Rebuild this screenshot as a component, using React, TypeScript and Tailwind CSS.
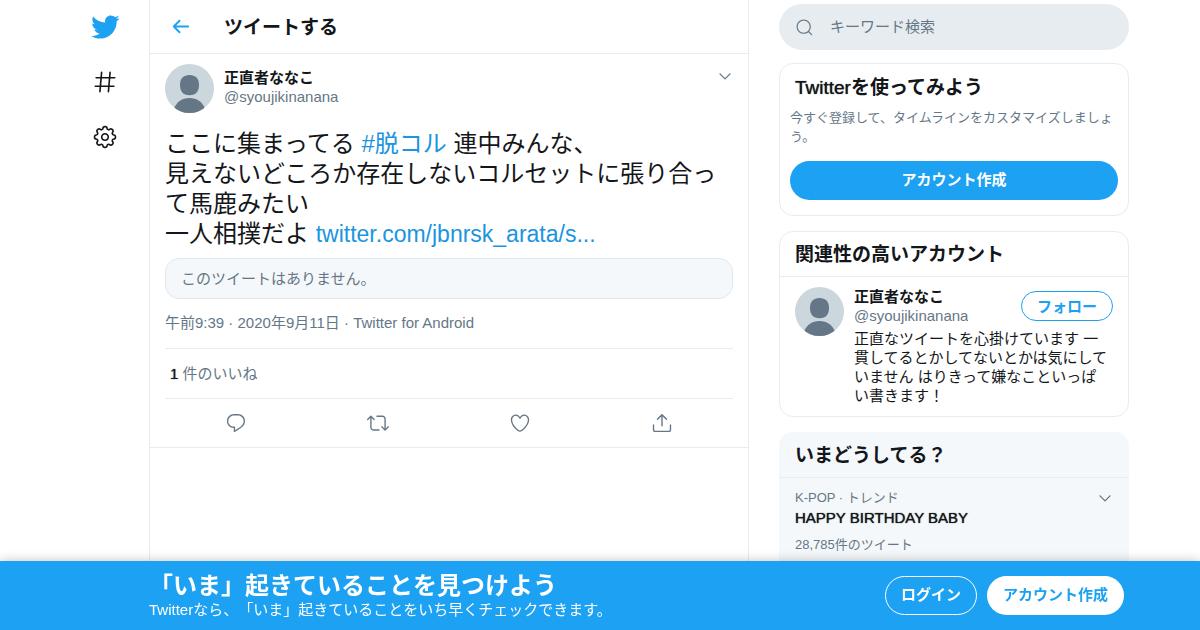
import type { ReactNode } from 'react'

const ICONS = {
  bird: 'M23.643 4.937c-.835.37-1.732.62-2.675.733.962-.576 1.7-1.49 2.048-2.578-.9.534-1.897.922-2.958 1.13-.85-.904-2.06-1.47-3.4-1.47-2.572 0-4.658 2.086-4.658 4.66 0 .364.042.718.12 1.06-3.873-.195-7.304-2.05-9.602-4.868-.4.69-.63 1.49-.63 2.342 0 1.616.823 3.043 2.072 3.878-.764-.025-1.482-.234-2.11-.583v.06c0 2.257 1.605 4.14 3.737 4.568-.392.106-.803.162-1.227.162-.3 0-.593-.028-.877-.082.593 1.85 2.313 3.198 4.352 3.234-1.595 1.25-3.604 1.995-5.786 1.995-.376 0-.747-.022-1.112-.065 2.062 1.323 4.51 2.093 7.14 2.093 8.57 0 13.255-7.098 13.255-13.254 0-.2-.005-.402-.014-.602.91-.658 1.7-1.477 2.323-2.41z',
  hash: 'M21 7.337h-3.93l.372-4.272c.036-.412-.27-.775-.682-.812-.417-.03-.776.27-.812.683l-.383 4.4h-6.32l.37-4.27c.037-.413-.27-.776-.68-.813-.42-.03-.777.27-.813.683l-.382 4.4H3.782c-.414 0-.75.337-.75.75s.336.75.75.75H7.61l-.55 6.327H3c-.414 0-.75.336-.75.75s.336.75.75.75h3.93l-.372 4.272c-.036.412.27.775.682.812l.066.003c.385 0 .712-.295.746-.686l.383-4.4h6.32l-.37 4.27c-.036.413.27.776.682.813l.066.003c.385 0 .712-.295.746-.686l.382-4.4h3.957c.413 0 .75-.337.75-.75s-.337-.75-.75-.75H16.39l.55-6.327H21c.414 0 .75-.336.75-.75s-.336-.75-.75-.75zm-6.115 7.826h-6.32l.55-6.326h6.32l-.55 6.326z',
  gear: 'M12 8.21c-2.09 0-3.79 1.7-3.79 3.79s1.7 3.79 3.79 3.79 3.79-1.7 3.79-3.79-1.7-3.79-3.79-3.79zm0 6.08c-1.262 0-2.29-1.026-2.29-2.29S10.74 9.71 12 9.71s2.29 1.026 2.29 2.29-1.028 2.29-2.29 2.29zM12.36 22.375h-.722c-1.183 0-2.154-.888-2.262-2.064l-.014-.147c-.025-.287-.207-.533-.472-.644-.286-.12-.582-.065-.798.115l-.116.097c-.868.725-2.253.663-3.06-.14l-.51-.51c-.836-.84-.896-2.154-.14-3.06l.098-.118c.186-.222.23-.523.122-.787-.11-.272-.358-.454-.646-.48l-.15-.014c-1.18-.107-2.067-1.08-2.067-2.262v-.722c0-1.183.888-2.154 2.064-2.262l.156-.014c.285-.025.53-.207.642-.473.11-.27.065-.573-.12-.795l-.094-.116c-.757-.908-.698-2.223.137-3.06l.512-.512c.804-.804 2.188-.865 3.06-.14l.116.098c.218.184.528.23.79.122.27-.112.452-.358.477-.643l.014-.153c.107-1.18 1.08-2.066 2.262-2.066h.722c1.183 0 2.154.888 2.262 2.064l.014.156c.025.285.206.53.472.64.277.117.58.062.794-.117l.12-.102c.867-.723 2.254-.662 3.06.14l.51.512c.836.838.896 2.153.14 3.06l-.1.118c-.188.22-.234.522-.123.788.112.27.36.45.646.478l.152.014c1.18.107 2.067 1.08 2.067 2.262v.723c0 1.183-.888 2.154-2.064 2.262l-.155.014c-.284.024-.53.205-.64.47-.113.272-.067.574.117.795l.1.12c.756.905.696 2.22-.14 3.06l-.51.51c-.807.804-2.19.864-3.06.14l-.115-.096c-.217-.183-.53-.23-.79-.122-.273.114-.455.36-.48.646l-.014.15c-.107 1.173-1.08 2.06-2.262 2.06zm-3.773-4.42c.3 0 .593.06.87.175.79.328 1.324 1.054 1.4 1.896l.014.147c.037.4.367.7.77.7h.722c.4 0 .73-.3.768-.7l.014-.148c.076-.842.61-1.567 1.392-1.892.793-.33 1.696-.182 2.333.35l.113.094c.178.148.366.18.493.18.206 0 .4-.08.546-.227l.51-.51c.284-.284.305-.73.048-1.038l-.1-.12c-.542-.65-.677-1.54-.352-2.323.326-.79 1.052-1.32 1.894-1.397l.155-.014c.397-.037.7-.367.7-.77v-.722c0-.4-.303-.73-.702-.768l-.152-.014c-.846-.078-1.57-.61-1.895-1.393-.326-.788-.19-1.678.353-2.327l.1-.118c.257-.31.236-.756-.048-1.04l-.51-.51c-.146-.147-.34-.227-.546-.227-.127 0-.315.032-.492.18l-.12.1c-.634.528-1.55.67-2.322.354-.788-.327-1.32-1.052-1.397-1.896l-.014-.155c-.035-.397-.365-.7-.767-.7h-.723c-.4 0-.73.303-.768.702l-.014.152c-.076.843-.608 1.568-1.39 1.893-.787.326-1.693.183-2.33-.35l-.118-.096c-.18-.15-.368-.18-.495-.18-.206 0-.4.08-.546.226l-.512.51c-.282.284-.303.73-.046 1.038l.1.118c.54.653.677 1.544.352 2.325-.327.788-1.052 1.32-1.895 1.397l-.156.014c-.397.037-.7.367-.7.77v.722c0 .4.303.73.702.768l.15.014c.848.078 1.573.612 1.897 1.396.325.786.19 1.675-.353 2.325l-.096.115c-.26.31-.238.756.046 1.04l.51.51c.146.147.34.227.546.227.127 0 .315-.03.492-.18l.116-.096c.406-.336.923-.524 1.453-.524z',
  back: 'M20 11H7.414l4.293-4.293c.39-.39.39-1.023 0-1.414s-1.023-.39-1.414 0l-6 6c-.39.39-.39 1.023 0 1.414l6 6c.195.195.45.293.707.293s.512-.098.707-.293c.39-.39.39-1.023 0-1.414L7.414 13H20c.553 0 1-.447 1-1s-.447-1-1-1z',
  caret: 'M20.207 8.147c-.39-.39-1.023-.39-1.414 0L12 14.94 5.207 8.147c-.39-.39-1.023-.39-1.414 0-.39.39-.39 1.023 0 1.414l7.5 7.5c.195.196.45.294.707.294s.512-.098.707-.293l7.5-7.5c.39-.39.39-1.022 0-1.413z',
  search: 'M21.53 20.47l-3.66-3.66C19.195 15.24 20 13.214 20 11c0-4.97-4.03-9-9-9s-9 4.03-9 9 4.03 9 9 9c2.215 0 4.24-.804 5.808-2.13l3.66 3.66c.147.146.34.22.53.22s.385-.073.53-.22c.295-.293.295-.767.002-1.06zM3.5 11c0-4.135 3.365-7.5 7.5-7.5s7.5 3.365 7.5 7.5-3.365 7.5-7.5 7.5-7.5-3.365-7.5-7.5z',
  reply: 'M14.046 2.242l-4.148-.01h-.002c-4.374 0-7.8 3.427-7.8 7.802 0 4.098 3.186 7.206 7.465 7.37v3.828c0 .108.044.286.12.403.142.225.384.347.632.347.138 0 .277-.038.402-.118.264-.168 6.473-4.14 8.088-5.506 1.902-1.61 3.04-3.97 3.043-6.312v-.017c-.006-4.367-3.43-7.787-7.8-7.788zm3.787 12.972c-1.134.96-4.862 3.405-6.772 4.643V16.67c0-.414-.335-.75-.75-.75h-.396c-3.66 0-6.318-2.476-6.318-5.886 0-3.534 2.768-6.302 6.3-6.302l4.147.01h.002c3.532 0 6.3 2.766 6.302 6.296-.003 1.91-.942 3.844-2.514 5.176z',
  retweet: 'M23.77 15.67c-.292-.293-.767-.293-1.06 0l-2.22 2.22V7.65c0-2.068-1.683-3.75-3.75-3.75h-5.85c-.414 0-.75.336-.75.75s.336.75.75.75h5.85c1.24 0 2.25 1.01 2.25 2.25v10.24l-2.22-2.22c-.293-.293-.768-.293-1.06 0s-.294.768 0 1.06l3.5 3.5c.145.147.337.22.53.22s.383-.072.53-.22l3.5-3.5c.294-.292.294-.767 0-1.06zm-10.66 3.28H7.26c-1.24 0-2.25-1.01-2.25-2.25V6.46l2.22 2.22c.148.147.34.22.532.22s.384-.073.53-.22c.293-.293.293-.768 0-1.06l-3.5-3.5c-.293-.294-.768-.294-1.06 0l-3.5 3.5c-.294.292-.294.767 0 1.06s.767.293 1.06 0l2.22-2.22V16.7c0 2.068 1.683 3.75 3.75 3.75h5.85c.414 0 .75-.336.75-.75s-.337-.75-.75-.75z',
  like: 'M12 21.638h-.014C9.403 21.59 1.95 14.856 1.95 8.478c0-3.064 2.525-5.754 5.403-5.754 2.29 0 3.83 1.58 4.646 2.73.814-1.148 2.354-2.73 4.645-2.73 2.88 0 5.404 2.69 5.404 5.755 0 6.376-7.454 13.11-10.037 13.157H12zM7.354 4.225c-2.08 0-3.903 1.988-3.903 4.255 0 5.74 7.034 11.596 8.55 11.658 1.518-.062 8.55-5.917 8.55-11.658 0-2.267-1.823-4.255-3.903-4.255-2.528 0-3.94 2.936-3.952 2.965-.23.562-1.156.562-1.387 0-.014-.03-1.425-2.965-3.954-2.965z',
  share: 'M17.53 7.47l-5-5c-.293-.293-.768-.293-1.06 0l-5 5c-.294.293-.294.768 0 1.06s.767.294 1.06 0l3.72-3.72V15c0 .414.336.75.75.75s.75-.336.75-.75V4.81l3.72 3.72c.146.147.338.22.53.22s.384-.072.53-.22c.293-.293.293-.767 0-1.06zM19.708 21.944H4.292C3.028 21.944 2 20.916 2 19.652V14c0-.414.336-.75.75-.75s.75.336.75.75v5.652c0 .437.355.792.792.792h15.416c.437 0 .792-.355.792-.792V14c0-.414.336-.75.75-.75s.75.336.75.75v5.652c0 1.264-1.028 2.292-2.292 2.292z',
}

const ACTIONS: { name: keyof typeof ICONS; label: string }[] = [
  { name: 'reply', label: '返信' },
  { name: 'retweet', label: 'リツイート' },
  { name: 'like', label: 'いいね' },
  { name: 'share', label: '共有' },
]

function Icon({ name, className }: { name: keyof typeof ICONS; className: string }) {
  return (
    <svg viewBox="0 0 24 24" fill="currentColor" aria-hidden="true" className={`shrink-0 ${className}`}>
      <path d={ICONS[name]} />
    </svg>
  )
}

function Avatar() {
  return (
    <div className="size-[49px] shrink-0 overflow-hidden rounded-full bg-[#ccd6dd]">
      <svg viewBox="0 0 49 49" fill="#657786" aria-hidden="true">
        <path d="M24.5 11c6 0 9.500 3.600 9.500 9.600 0 7.400-3 10.600-9.500 10.600s-9.500-3.200-9.500-10.600c0-6 3.500-9.600 9.500-9.600z" />
        <path d="M24.500 34c7.500 0 12.500 3.500 15.500 10.500v5H9v-5C12 37.500 17 34 24.500 34z" />
      </svg>
    </div>
  )
}

// Latin text keeps the regular widths, only the strokes get heavier
function Strong({ children }: { children: ReactNode }) {
  return <span className="font-medium [text-shadow:0_0_1px_currentColor]">{children}</span>
}

function UserName() {
  return (
    <div className="min-w-0 text-[15px] leading-[19px]">
      <div className="truncate font-bold">正直者ななこ</div>
      <div className="truncate text-[#657786]">@syoujikinanana</div>
    </div>
  )
}

function SideNav() {
  return (
    <nav className="flex w-22 shrink-0 flex-col items-center">
      <a href="#home" aria-label="Twitter" className="flex h-[54px] items-center text-[#1da1f2]">
        <Icon name="bird" className="size-[30px]" />
      </a>
      <a href="#explore" aria-label="話題を検索" className="flex h-14 items-center">
        <Icon name="hash" className="size-[26px]" />
      </a>
      <a href="#settings" aria-label="設定" className="flex h-[54px] items-center">
        <Icon name="gear" className="size-[26px]" />
      </a>
    </nav>
  )
}

function Tweet() {
  return (
    <article className="border-b border-[#e6ecf0] px-[15px] pt-[10px]">
      <div className="flex gap-[10px]">
        <Avatar />
        <div className="flex-1 pt-1">
          <UserName />
        </div>
        <button type="button" aria-label="もっと見る" className="h-6 text-[#657786]">
          <Icon name="caret" className="size-4" />
        </button>
      </div>

      <p className="mt-4 text-[24px] leading-[30px]">
        ここに集まってる <a href="#tag" className="text-[#1b95e0]">#脱コル</a> 連中みんな、
        <br />
        見えないどころか存在しないコルセットに張り合って馬鹿みたい
        <br />
        一人相撲だよ <a href="#link" className="text-[23px] text-[#1b95e0]">twitter.com/jbnrsk_arata/s...</a>
      </p>

      <div className="mt-[9px] rounded-[14px] border border-[#e1e8ed] bg-[#f5f8fa] px-[15px] py-[10px] text-[15px] leading-[19px] text-[#657786]">
        このツイートはありません。
      </div>

      <div className="pt-[14px] pb-4 text-[15px] leading-[19px] text-[#657786]">
        午前9:39 · 2020年9月11日 · Twitter for Android
      </div>

      <div className="border-y border-[#e6ecf0] px-[5px] py-[15px] text-[15px] leading-[19px] text-[#657786]">
        <span className="text-[#14171a]"><Strong>1</Strong></span> 件のいいね
      </div>

      <div className="flex h-12 items-center text-[#657786]">
        {ACTIONS.map((a) => (
          <div key={a.name} className="flex flex-1 justify-center">
            <button type="button" aria-label={a.label}>
              <Icon name={a.name} className="size-[22px]" />
            </button>
          </div>
        ))}
      </div>
    </article>
  )
}

function Sidebar() {
  return (
    <aside className="w-[350px] shrink-0 pt-1">
      <label className="flex h-[46px] items-center gap-4 rounded-full bg-[#e6ecf0] px-4 text-[#657786]">
        <Icon name="search" className="size-[19px]" />
        <input
          type="search"
          aria-label="キーワード検索"
          placeholder="キーワード検索"
          className="min-w-0 flex-1 bg-transparent text-[15px] outline-none placeholder:text-[#657786]"
        />
      </label>

      <section className="mt-[13px] rounded-[14px] border border-[#e6ecf0] px-[10px] pt-[11px] pb-[15px]">
        <h2 className="px-[5px] text-[19px] leading-[25px] font-bold">
          <Strong>Twitter</Strong>を使ってみよう
        </h2>
        <p className="mt-2 text-[13px] leading-[19px] text-[#657786]">
          今すぐ登録して、タイムラインをカスタマイズしましょう。
        </p>
        <button type="button" className="mt-[15px] h-[39px] w-full rounded-full bg-[#1da1f2] text-[15px] font-bold text-white">
          アカウント作成
        </button>
      </section>

      <section className="mt-[15px] rounded-[14px] border border-[#e6ecf0]">
        <h2 className="border-b border-[#e6ecf0] px-[15px] pt-[11px] pb-[9px] text-[19px] leading-6 font-bold">
          関連性の高いアカウント
        </h2>
        <div className="flex gap-[10px] px-[15px] py-[10px]">
          <Avatar />
          <div className="min-w-0 flex-1">
            <div className="flex justify-between">
              <UserName />
              <button type="button" className="mt-1 h-[30px] rounded-full border border-[#1da1f2] px-[15px] text-[15px] leading-none font-bold text-[#1da1f2]">
                フォロー
              </button>
            </div>
            <p className="mt-1 pr-1 pb-px text-[15px] leading-[19px]">
              正直なツイートを心掛けています 一貫してるとかしてないとかは気にしていません はりきって嫌なこといっぱい書きます！
            </p>
          </div>
        </div>
      </section>

      <section className="mt-[15px] rounded-[14px] bg-[#f5f8fa] pb-10">
        <h2 className="border-b border-[#e6ecf0] px-4 pt-[11px] pb-[9px] text-[19px] leading-[25px] font-bold">いまどうしてる？</h2>
        <div className="px-4 pt-[10px]">
          <div className="flex items-center justify-between text-[13px] leading-5 text-[#657786]">
            <span>K-POP · トレンド</span>
            <button type="button" aria-label="もっと見る">
              <Icon name="caret" className="size-4" />
            </button>
          </div>
          <div className="text-[15px] leading-5"><Strong>HAPPY BIRTHDAY BABY</Strong></div>
          <div className="mt-[7px] text-[13px] leading-5 text-[#657786]">28,785件のツイート</div>
        </div>
      </section>
    </aside>
  )
}

function LoginBar() {
  return (
    <div className="fixed inset-x-0 bottom-0 bg-[#1da1f2] text-white shadow-[0_0_10px_rgba(0,0,0,0.25)]">
      <div className="mx-auto flex h-[69px] max-w-[1078px] items-center justify-between pr-[15px] pl-22">
        <div className="pt-px">
          <div className="text-[24px] leading-7 font-bold">「いま」起きていることを見つけよう</div>
          <div className="text-[15px] leading-5">Twitterなら、「いま」起きていることをいち早くチェックできます。</div>
        </div>
        <div className="flex gap-[10px] text-[15px] font-bold">
          <button type="button" className="h-[39px] rounded-full border border-white px-[15px]">ログイン</button>
          <button type="button" className="h-[39px] rounded-full bg-white px-4 text-[#1da1f2]">アカウント作成</button>
        </div>
      </div>
    </div>
  )
}

export default function App() {
  return (
    <div
      lang="ja"
      className="min-h-screen bg-white font-['Liberation_Sans','Noto_Sans_CJK_JP',sans-serif] text-[#14171a] [text-spacing-trim:space-all]"
    >
      <div className="mx-auto flex min-h-screen max-w-[1078px] pr-[10px]">
        <SideNav />
        <main className="min-w-0 flex-1 border-x border-[#e6ecf0]">
          <header className="flex h-[54px] items-center border-b border-[#e6ecf0] px-[19px]">
            <button type="button" aria-label="戻る" className="w-[55px] text-[#1da1f2]">
              <Icon name="back" className="size-[23px]" />
            </button>
            <h1 className="pt-0.5 text-[19px] leading-[25px] font-bold">ツイートする</h1>
          </header>
          <Tweet />
        </main>
        <div className="w-[30px] shrink-0" />
        <Sidebar />
      </div>
      <LoginBar />
    </div>
  )
}
